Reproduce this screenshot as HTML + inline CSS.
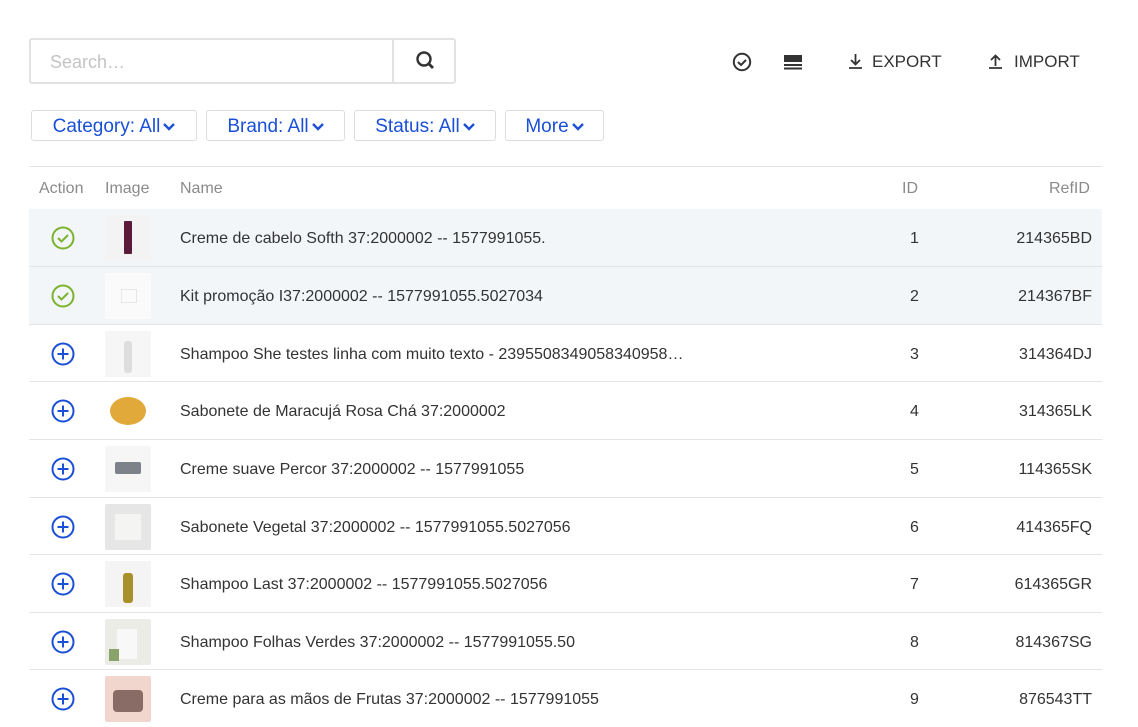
<!DOCTYPE html>
<html><head><style>
body{margin:0;background:#fff;font-family:"Liberation Sans",Arial,sans-serif;width:1138px;height:710px;overflow:hidden;position:relative}
.search{position:absolute;left:29px;top:38px;width:427px;height:46px;border:2px solid #e2e2e2;border-radius:3px;box-sizing:border-box}
.search span{position:absolute;left:19px;top:12px;font-size:18px;color:#c4c4c4}
.search .btn{position:absolute;left:361px;top:0;width:64px;height:42px;border-left:2px solid #e2e2e2}
.tb{position:absolute;top:52px;font-size:17px;color:#333}
.f{position:absolute;top:110px;height:31px;border:1px solid #ddd;border-radius:3px;box-sizing:border-box;color:#1a4fd6;font-size:19px;line-height:31px;text-align:center}
.f svg{vertical-align:middle;margin-left:3px}
.hr{position:absolute;left:29px;width:1073px;height:1px;background:#e4e4e4}
.h{position:absolute;top:180px;font-size:16px;color:#8a8a8a}
.row{position:absolute;left:29px;width:1073px;height:57px}
.row .ic{position:absolute;left:22px;top:17px}
.row .im{position:absolute;left:76px;top:6px;width:46px;height:46px;background:#f3f3f3;border-radius:2px;overflow:hidden}
.row .n{position:absolute;left:151px;top:21px;font-size:16px;color:#333}
.row .id{position:absolute;left:881px;top:21px;font-size:16px;color:#333}
.row .r{position:absolute;right:10px;top:21px;font-size:16px;color:#333}
</style></head><body>
<div class="search"><span>Search…</span><div class="btn"><svg width="64" height="42"><circle cx="30" cy="19" r="6.5" fill="none" stroke="#333" stroke-width="2.4"/><line x1="35" y1="24" x2="39" y2="28" stroke="#333" stroke-width="2.8"/></svg></div></div>
<svg style="position:absolute;left:732px;top:52px" width="20" height="20"><circle cx="10" cy="10" r="8.2" fill="none" stroke="#333" stroke-width="2"/><path d="M6 10l3 3 5-5" fill="none" stroke="#333" stroke-width="2"/></svg>
<svg style="position:absolute;left:784px;top:55px" width="18" height="15"><rect x="0" y="0" width="18" height="7" fill="#333"/><rect x="0" y="9" width="18" height="2" fill="#333"/><rect x="0" y="12.5" width="18" height="2" fill="#333"/></svg>
<svg style="position:absolute;left:848px;top:53px" width="15" height="16"><path d="M7.5 1v10M3 7l4.5 4.5L12 7M1 15h13" fill="none" stroke="#333" stroke-width="1.8"/></svg>
<div class="tb" style="left:872px">EXPORT</div>
<svg style="position:absolute;left:988px;top:53px" width="15" height="16"><path d="M7.5 13V3M3 7l4.5-4.5L12 7M1 15h13" fill="none" stroke="#333" stroke-width="1.8"/></svg>
<div class="tb" style="left:1014px">IMPORT</div>
<div class="f" style="left:31px;width:166px">Category: All<svg width="12" height="8"><path d="M1 1l5 5 5-5" fill="none" stroke="#1a4fd6" stroke-width="2.4"/></svg></div>
<div class="f" style="left:206px;width:139px">Brand: All<svg width="12" height="8"><path d="M1 1l5 5 5-5" fill="none" stroke="#1a4fd6" stroke-width="2.4"/></svg></div>
<div class="f" style="left:354px;width:142px">Status: All<svg width="12" height="8"><path d="M1 1l5 5 5-5" fill="none" stroke="#1a4fd6" stroke-width="2.4"/></svg></div>
<div class="f" style="left:505px;width:99px">More<svg width="12" height="8"><path d="M1 1l5 5 5-5" fill="none" stroke="#1a4fd6" stroke-width="2.4"/></svg></div>
<div class="hr" style="top:166px"></div>
<div class="h" style="left:39px">Action</div><div class="h" style="left:105px">Image</div><div class="h" style="left:180px">Name</div><div class="h" style="left:902px">ID</div><div class="h" style="left:1049px">RefID</div>

<div class="row" style="top:209px;background:#f3f6f9"><svg class="ic" width="24" height="24"><circle cx="12" cy="12" r="10.5" fill="none" stroke="#7ab32e" stroke-width="2"/><path d="M7 12l3.5 3.5L17 9" fill="none" stroke="#7ab32e" stroke-width="2"/></svg><div class="im"><div style="position:absolute;left:19px;top:6px;width:8px;height:33px;background:#5a1a3a;border-radius:1px"></div></div><div class="n">Creme de cabelo Softh 37:2000002 -- 1577991055.</div><div class="id">1</div><div class="r">214365BD</div></div>
<div class="hr" style="top:266px"></div>
<div class="row" style="top:267px;background:#f3f6f9"><svg class="ic" width="24" height="24"><circle cx="12" cy="12" r="10.5" fill="none" stroke="#7ab32e" stroke-width="2"/><path d="M7 12l3.5 3.5L17 9" fill="none" stroke="#7ab32e" stroke-width="2"/></svg><div class="im" style="background:#fafafa"><div style="position:absolute;left:16px;top:16px;width:14px;height:12px;border:1px solid #e6e6e6"></div></div><div class="n">Kit promoção I37:2000002 -- 1577991055.5027034</div><div class="id">2</div><div class="r">214367BF</div></div>
<div class="hr" style="top:324px"></div>

<div class="row" style="top:325px"><svg class="ic" width="24" height="24"><circle cx="12" cy="12" r="10.5" fill="none" stroke="#1a4fd6" stroke-width="2"/><path d="M12 6.5v11M6.5 12h11" stroke="#1a4fd6" stroke-width="2"/></svg><div class="im" style="background:#f6f6f6"><div style="position:absolute;left:19px;top:10px;width:8px;height:32px;background:#ddd;border-radius:3px"></div></div><div class="n">Shampoo She testes linha com muito texto - 2395508349058340958…</div><div class="id">3</div><div class="r">314364DJ</div></div>
<div class="hr" style="top:381px"></div>
<div class="row" style="top:382px"><svg class="ic" width="24" height="24"><circle cx="12" cy="12" r="10.5" fill="none" stroke="#1a4fd6" stroke-width="2"/><path d="M12 6.5v11M6.5 12h11" stroke="#1a4fd6" stroke-width="2"/></svg><div class="im" style="background:#fff"><div style="position:absolute;left:5px;top:9px;width:36px;height:28px;background:#e0a93a;border-radius:50%"></div></div><div class="n">Sabonete de Maracujá Rosa Chá 37:2000002</div><div class="id">4</div><div class="r">314365LK</div></div>
<div class="hr" style="top:439px"></div>
<div class="row" style="top:440px"><svg class="ic" width="24" height="24"><circle cx="12" cy="12" r="10.5" fill="none" stroke="#1a4fd6" stroke-width="2"/><path d="M12 6.5v11M6.5 12h11" stroke="#1a4fd6" stroke-width="2"/></svg><div class="im" style="background:#f6f6f6"><div style="position:absolute;left:10px;top:16px;width:26px;height:12px;background:#7d8189;border-radius:2px"></div></div><div class="n">Creme suave Percor 37:2000002 -- 1577991055</div><div class="id">5</div><div class="r">114365SK</div></div>
<div class="hr" style="top:497px"></div>
<div class="row" style="top:498px"><svg class="ic" width="24" height="24"><circle cx="12" cy="12" r="10.5" fill="none" stroke="#1a4fd6" stroke-width="2"/><path d="M12 6.5v11M6.5 12h11" stroke="#1a4fd6" stroke-width="2"/></svg><div class="im" style="background:#e6e6e6"><div style="position:absolute;left:10px;top:10px;width:26px;height:26px;background:#f4f4f2"></div></div><div class="n">Sabonete Vegetal 37:2000002 -- 1577991055.5027056</div><div class="id">6</div><div class="r">414365FQ</div></div>
<div class="hr" style="top:554px"></div>
<div class="row" style="top:555px"><svg class="ic" width="24" height="24"><circle cx="12" cy="12" r="10.5" fill="none" stroke="#1a4fd6" stroke-width="2"/><path d="M12 6.5v11M6.5 12h11" stroke="#1a4fd6" stroke-width="2"/></svg><div class="im" style="background:#f4f4f4"><div style="position:absolute;left:18px;top:12px;width:10px;height:30px;background:#a8902a;border-radius:3px"></div></div><div class="n">Shampoo Last 37:2000002 -- 1577991055.5027056</div><div class="id">7</div><div class="r">614365GR</div></div>
<div class="hr" style="top:612px"></div>
<div class="row" style="top:613px"><svg class="ic" width="24" height="24"><circle cx="12" cy="12" r="10.5" fill="none" stroke="#1a4fd6" stroke-width="2"/><path d="M12 6.5v11M6.5 12h11" stroke="#1a4fd6" stroke-width="2"/></svg><div class="im" style="background:#ecece6"><div style="position:absolute;left:12px;top:10px;width:20px;height:30px;background:#f8f8f8"></div><div style="position:absolute;left:4px;top:30px;width:10px;height:12px;background:#8aa36a"></div></div><div class="n">Shampoo Folhas Verdes 37:2000002 -- 1577991055.50</div><div class="id">8</div><div class="r">814367SG</div></div>
<div class="hr" style="top:669px"></div>
<div class="row" style="top:670px"><svg class="ic" width="24" height="24"><circle cx="12" cy="12" r="10.5" fill="none" stroke="#1a4fd6" stroke-width="2"/><path d="M12 6.5v11M6.5 12h11" stroke="#1a4fd6" stroke-width="2"/></svg><div class="im" style="background:#f0d6cc"><div style="position:absolute;left:8px;top:14px;width:30px;height:22px;background:#8a6c66;border-radius:4px"></div></div><div class="n">Creme para as mãos de Frutas 37:2000002 -- 1577991055</div><div class="id">9</div><div class="r">876543TT</div></div>
</body></html>
